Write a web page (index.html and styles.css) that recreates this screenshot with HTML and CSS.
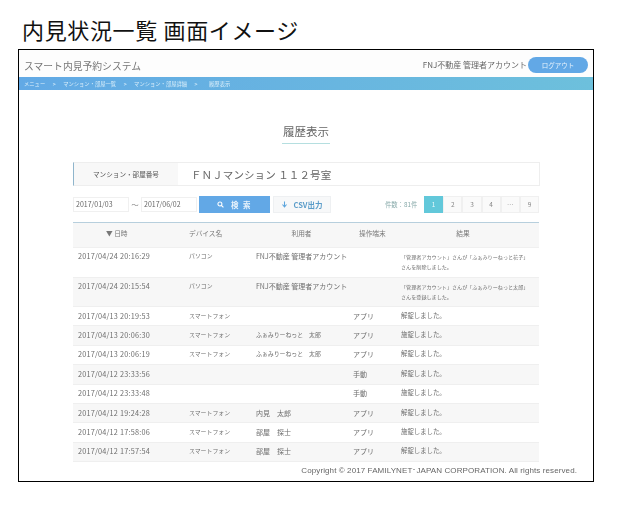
FILE: index.html
```html
<!DOCTYPE html>
<html lang="ja">
<head>
<meta charset="utf-8">
<title>内見状況一覧 画面イメージ</title>
<link rel="stylesheet" href="styles.css">
</head>
<body>
<h1 class="doc-title">内見状況一覧 画面イメージ</h1>
<div class="frame">
  <div class="soft">
    <header class="top">
      <div class="brand">スマート内見予約システム</div>
      <div class="account">FNJ不動産 管理者アカウント</div>
      <div class="logout">ログアウト</div>
    </header>
    <nav class="crumbs">
      <span>メニュー</span><span>&gt;</span><span>マンション・部屋一覧</span><span>&gt;</span><span>マンション・部屋詳細</span><span>&gt;</span><span class="crumb-now">履歴表示</span>
    </nav>
    <main class="content">
      <div class="heading-wrap"><h2 class="heading">履歴表示</h2></div>
      <div class="prop">
        <div class="prop-label">マンション・部屋番号</div>
        <div class="prop-value">ＦＮＪマンション １１２号室</div>
      </div>
      <div class="search">
        <div class="date">2017/01/03</div>
        <span class="tilde">～</span>
        <div class="date">2017/06/02</div>
        <div class="btn-search">
          <svg class="ico" viewBox="0 0 12 12"><circle cx="5" cy="5" r="3.4" fill="none" stroke="#fff" stroke-width="1.8"/><path d="M7.5 7.5 11 11" stroke="#fff" stroke-width="2"/></svg>
          <span>検 索</span>
        </div>
        <div class="btn-csv">
          <svg class="ico" viewBox="0 0 12 12"><path d="M6 1v8M2.5 6 6 10l3.500-4" fill="none" stroke="#5da5dd" stroke-width="1.8"/></svg>
          <span>CSV出力</span>
        </div>
        <div class="count">件数：81件</div>
        <div class="pager">
          <span class="page on">1</span><span class="page">2</span><span class="page">3</span><span class="page">4</span><span class="page">…</span><span class="page">9</span>
        </div>
      </div>
      <table class="log">
        <colgroup><col class="c1"><col class="c2"><col class="c3"><col class="c4"><col class="c5"></colgroup>
        <thead>
          <tr><th class="th-date">▼ 日時</th><th>デバイス名</th><th class="center">利用者</th><th class="th-op">操作端末</th><th class="center th-res">結果</th></tr>
        </thead>
        <tbody>
          <tr class="tall"><td>2017/04/24 20:16:29</td><td>パソコン</td><td>FNJ不動産 管理者アカウント</td><td></td><td class="result">「管理者アカウント」さんが「ふぁみりーねっと花子」さんを削除しました。</td></tr>
          <tr class="tall alt"><td>2017/04/24 20:15:54</td><td>パソコン</td><td>FNJ不動産 管理者アカウント</td><td></td><td class="result">「管理者アカウント」さんが「ふぁみりーねっと太郎」さんを登録しました。</td></tr>
          <tr><td>2017/04/13 20:19:53</td><td>スマートフォン</td><td></td><td>アプリ</td><td>解錠しました。</td></tr>
          <tr class="alt"><td>2017/04/13 20:06:30</td><td>スマートフォン</td><td class="kana">ふぁみりーねっと　太郎</td><td>アプリ</td><td>施錠しました。</td></tr>
          <tr><td>2017/04/13 20:06:19</td><td>スマートフォン</td><td class="kana">ふぁみりーねっと　太郎</td><td>アプリ</td><td>解錠しました。</td></tr>
          <tr class="alt"><td>2017/04/12 23:33:56</td><td></td><td></td><td>手動</td><td>解錠しました。</td></tr>
          <tr><td>2017/04/12 23:33:48</td><td></td><td></td><td>手動</td><td>施錠しました。</td></tr>
          <tr class="alt"><td>2017/04/12 19:24:28</td><td>スマートフォン</td><td>内見　太郎</td><td>アプリ</td><td>解錠しました。</td></tr>
          <tr><td>2017/04/12 17:58:06</td><td>スマートフォン</td><td>部屋　探士</td><td>アプリ</td><td>施錠しました。</td></tr>
          <tr class="alt"><td>2017/04/12 17:57:54</td><td>スマートフォン</td><td>部屋　探士</td><td>アプリ</td><td>解錠しました。</td></tr>
        </tbody>
      </table>
      <footer class="copy">Copyright © 2017 FAMILYNET･JAPAN CORPORATION. All rights reserved.</footer>
    </main>
  </div>
</div>
</body>
</html>
```
FILE: styles.css
```css
* { box-sizing: border-box; }
html, body { margin: 0; padding: 0; }
body {
  background: #fff;
  font-family: "Noto Sans CJK JP", "Noto Sans", sans-serif;
  color: #555;
  width: 622px;
  height: 506px;
  overflow: hidden;
}
.doc-title {
  margin: 0 0 0 22px;
  height: 49px;
  padding-top: 13px;
  font-size: 22px;
  line-height: 33px;
  font-weight: 400;
  letter-spacing: 0.65px;
  color: #111;
  white-space: nowrap;
}
.frame {
  margin-left: 18px;
  width: 576px;
  height: 433px;
  border: 1px solid #000;
  overflow: hidden;
  background: #fff;
}
.soft { filter: blur(0.35px); height: 100%; }
.top {
  height: 27px;
  display: flex;
  align-items: center;
  padding: 3px 5px 0 5px;
  background: #fdfdfd;
}
.brand { font-size: 9.800px; color: #777; flex: 1; white-space: nowrap; margin-top: 2px; }
.account { font-size: 8px; color: #666; white-space: nowrap; margin-right: 1px; margin-top: -1px; }
.logout {
  width: 60px;
  height: 16px;
  border-radius: 8px;
  background: #62a8e6;
  color: #e8f3fc;
  font-size: 6.500px;
  line-height: 16px;
  text-align: center;
}
.crumbs {
  height: 13px;
  display: flex;
  align-items: center;
  gap: 7.500px;
  padding-left: 5px;
  background: linear-gradient(90deg, #62a9e5, #6dc0dc);
  color: #d9eefa;
  font-size: 5.300px;
  white-space: nowrap;
}
.crumb-now { margin-left: 4px; }
.content { padding: 0 53px 0 54px; }
.heading-wrap { display: flex; justify-content: center; padding-top: 31px; margin-left: -1px; }
.heading {
  margin: 0;
  font-size: 11.500px;
  line-height: 21px;
  font-weight: 400;
  color: #666;
  padding: 0 1px 1px;
  border-bottom: 1px solid #b5dfe0;
}
.prop {
  margin-top: 18px;
  height: 24px;
  display: flex;
  align-items: center;
  background: #fff;
  border: 1px solid #eee;
  border-left: 1px solid #8fb5cc;
}
.prop-label {
  width: 104px;
  height: 100%;
  background: #f8f8f8;
  font-size: 6.600px;
  line-height: 22px;
  text-align: center;
  color: #555;
}
.prop-value { padding-left: 13px; font-size: 10.500px; letter-spacing: 0.1px; color: #666; white-space: nowrap; }
.search {
  margin-top: 10px;
  height: 17px;
  display: flex;
  align-items: center;
}
.date {
  width: 56px;
  height: 15px;
  border: 1px solid #f0f0f0;
  font-size: 7px;
  line-height: 13px;
  color: #666;
  padding-left: 2px;
  white-space: nowrap;
  background: #fff;
}
.tilde { font-size: 7.500px; width: 12px; text-align: center; color: #777; }
.btn-search {
  margin-left: 2px;
  width: 71px;
  height: 17px;
  background: #62a8e6;
  color: #e8f3fc;
  display: flex;
  align-items: center;
  justify-content: center;
  gap: 7px;
  font-size: 7.500px;
  letter-spacing: 1.500px;
  font-weight: 700;
}
.btn-csv {
  margin-left: 3px;
  width: 58px;
  height: 17px;
  background: #f7f8f9;
  border: 1px solid #eef0f2;
  color: #5a9cc9;
  display: flex;
  align-items: center;
  justify-content: center;
  gap: 5px;
  font-size: 7.500px;
  font-weight: 700;
  white-space: nowrap;
}
.ico { width: 7px; height: 7px; flex: none; }
.count { margin-left: 54px; font-size: 6.300px; color: #8aa; width: 39px; white-space: nowrap; }
.pager { display: flex; }
.page {
  width: 19.200px;
  height: 17px;
  font-size: 6.500px;
  line-height: 15px;
  text-align: center;
  color: #888;
  background: #fafafa;
  border: 1px solid #f0f0f0;
}
.page.on { background: #62c8da; color: #e8f8fb; border-color: #62c8da; }
.log {
  margin-top: 9px;
  width: 466px;
  border-collapse: collapse;
  table-layout: fixed;
  border-top: 1px solid #b7cfdd;
  font-size: 7px;
  color: #6e6e6e;
}
.c1 { width: 110px; }
.c2 { width: 67px; }
.c3 { width: 97px; }
.c4 { width: 48px; }
.c5 { width: 144px; }
.log th {
  height: 25px;
  background: #f7f7f7;
  font-weight: 400;
  font-size: 6.700px;
  text-align: left;
  padding: 0 0 5px 6px;
  color: #777;
  border-bottom: 1px solid #f0f0f0;
}
.log th.center { text-align: center; }
.log th.th-date { padding-left: 33px; }
.log th.th-op { padding-left: 12px; }
.log th.th-res { padding-right: 8px; padding-left: 0; }
.log td {
  height: 19.400px;
  padding: 0 0 1px 5px;
  white-space: nowrap;
  border-bottom: 1px solid #efefef;
  line-height: 10px;
}
.log td:nth-child(2), .log td:nth-child(3), .log td:nth-child(4) { padding-left: 6px; }
.log td:nth-child(2) { font-size: 5.900px; }
.log td.kana { font-size: 5.900px; }
.log td:nth-child(5) { padding-left: 6px; font-size: 6.400px; }
.log td:first-child { font-size: 7.300px; letter-spacing: 0.2px; }
.log tr.tall td { height: 29.500px; vertical-align: top; padding-top: 3px; }
.log tr.tall td.result { white-space: normal; font-size: 5.100px; line-height: 10px; padding: 4px 12px 0 6px; }
.log tr.alt td { background: #f7f7f7; }
.copy {
  margin: 4px -37px 0 0;
  text-align: right;
  font-family: "Liberation Sans", sans-serif;
  font-size: 8px;
  letter-spacing: 0.1px;
  color: #666;
  white-space: nowrap;
}
```
